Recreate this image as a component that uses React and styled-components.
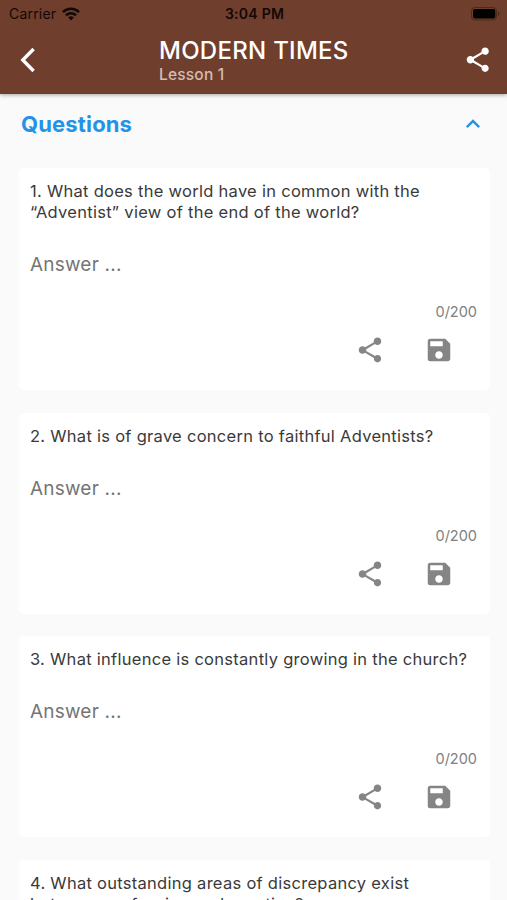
import React from "react";
import styled, { createGlobalStyle } from "styled-components";
import { MdShare, MdSave, MdKeyboardArrowUp } from "react-icons/md";

const GlobalStyle = createGlobalStyle`
  * {
    box-sizing: border-box;
  }

  html, body {
    margin: 0;
    background: #fafafa;
  }

  body {
    font-family: Inter, "Liberation Sans", sans-serif;
  }
`;

const Screen = styled.div`
  width: 100%;
  height: 900px;
  overflow: hidden;
  display: flex;
  flex-direction: column;
  background: #fafafa;
`;

const Header = styled.header`
  flex: none;
  height: 93.5px;
  background: #6f3e2d;
  box-shadow: 0 1px 4px rgba(0, 0, 0, 0.35);
`;

const StatusBar = styled.div`
  height: 27px;
  padding: 0 7px 0 9px;
  display: grid;
  grid-template-columns: 1fr auto 1fr;
  align-items: center;
  color: #120906;
`;

const Carrier = styled.div`
  display: flex;
  align-items: center;
  gap: 6px;
  font-size: 14px;
  letter-spacing: 0.2px;
`;

const Time = styled.div`
  font-size: 14px;
  font-weight: 600;
  letter-spacing: 0.25px;
`;

const Battery = styled.svg`
  justify-self: end;
`;

const AppBar = styled.div`
  height: 65px;
  padding: 0 15px 0 20px;
  display: grid;
  grid-template-columns: 139px 1fr auto;
  align-items: center;
  color: #fff;
`;

const Heading = styled.div`
  padding-top: 1px;
  display: flex;
  flex-direction: column;
`;

const Title = styled.h1`
  margin: 0;
  font-size: 24px;
  line-height: 28px;
  font-weight: 500;
  letter-spacing: 0.28px;
  white-space: nowrap;
`;

const Subtitle = styled.div`
  font-size: 15.5px;
  line-height: 19px;
  font-weight: 500;
  letter-spacing: 0.2px;
  color: #d4bdb2;
`;

const SectionHeader = styled.div`
  flex: none;
  height: 74.5px;
  padding: 0 20px 14px 21px;
  display: flex;
  align-items: center;
  justify-content: space-between;
  color: #2492e6;
`;

const SectionTitle = styled.h2`
  margin: 0;
  font-size: 22px;
  line-height: 28px;
  font-weight: 700;
  letter-spacing: 0.15px;
`;

const List = styled.main`
  display: flex;
  flex-direction: column;
  gap: 22.5px;
  padding: 0 17px 0 19px;
`;

const Card = styled.article`
  flex: none;
  padding: 13.4px 13px 25px 11px;
  border-radius: 5px;
  background: #fff;
`;

const Question = styled.p`
  margin: 0;
  font-size: 16.5px;
  line-height: 21.1px;
  letter-spacing: 0.28px;
  color: #3a3a3a;
  white-space: pre-line;
`;

const Answer = styled.div`
  margin-top: 28.7px;
  font-size: 19px;
  line-height: 26px;
  letter-spacing: 0.2px;
  color: #757575;
`;

const Counter = styled.div`
  margin-top: 25px;
  font-size: 14.5px;
  line-height: 18px;
  text-align: right;
  color: #808080;
`;

const Actions = styled.div`
  margin-top: 13.8px;
  padding-right: 23.5px;
  display: flex;
  justify-content: flex-end;
  gap: 38.5px;
  color: #858585;
`;

const questions = [
  "1. What does the world have in common with the\n“Adventist” view of the end of the world?",
  "2. What is of grave concern to faithful Adventists?",
  "3. What influence is constantly growing in the church?",
  "4. What outstanding areas of discrepancy exist\nbetween profession and practice?",
];

const WifiIcon = () => (
  <svg width="18" height="14" viewBox="0 0 18 14" fill="none" stroke="currentColor" strokeWidth="2.5">
    <path d="M1 5.1a11.4 11.4 0 0 1 16 0" />
    <path d="M4 8.3a7.1 7.1 0 0 1 10 0" />
    <path d="M9 13.4 6.2 10.6a4 4 0 0 1 5.6 0z" fill="currentColor" stroke="none" />
  </svg>
);

const BatteryIcon = () => (
  <Battery width="29" height="14" viewBox="0 0 29 14">
    <rect x="0.5" y="0.5" width="25" height="12.5" rx="3.5" fill="none" stroke="#4d291d" />
    <rect x="2" y="2" width="22.3" height="9.5" rx="2" fill="#000" />
    <path d="M27 4.5c2 .8 2 3.7 0 4.5z" fill="#4d291d" />
  </Battery>
);

const BackIcon = () => (
  <svg width="16" height="26" viewBox="0 0 16 26" fill="none" stroke="currentColor" strokeWidth="3.4">
    <path d="M13.6 2 2.8 13l10.8 11" />
  </svg>
);

const QuestionCard = ({ text }) => (
  <Card>
    <Question>{text}</Question>
    <Answer>Answer ...</Answer>
    <Counter>0/200</Counter>
    <Actions>
      <MdShare size={30} />
      <MdSave size={30} />
    </Actions>
  </Card>
);

const App = () => {
  return (
    <Screen>
      <GlobalStyle />
      <Header>
        <StatusBar>
          <Carrier>
            Carrier
            <WifiIcon />
          </Carrier>
          <Time>3:04 PM</Time>
          <BatteryIcon />
        </StatusBar>
        <AppBar>
          <BackIcon />
          <Heading>
            <Title>MODERN TIMES</Title>
            <Subtitle>Lesson 1</Subtitle>
          </Heading>
          <MdShare size={29.5} />
        </AppBar>
      </Header>
      <SectionHeader>
        <SectionTitle>Questions</SectionTitle>
        <MdKeyboardArrowUp size={28} />
      </SectionHeader>
      <List>
        {questions.map((text) => (
          <QuestionCard key={text} text={text} />
        ))}
      </List>
    </Screen>
  );
};

export default App;
